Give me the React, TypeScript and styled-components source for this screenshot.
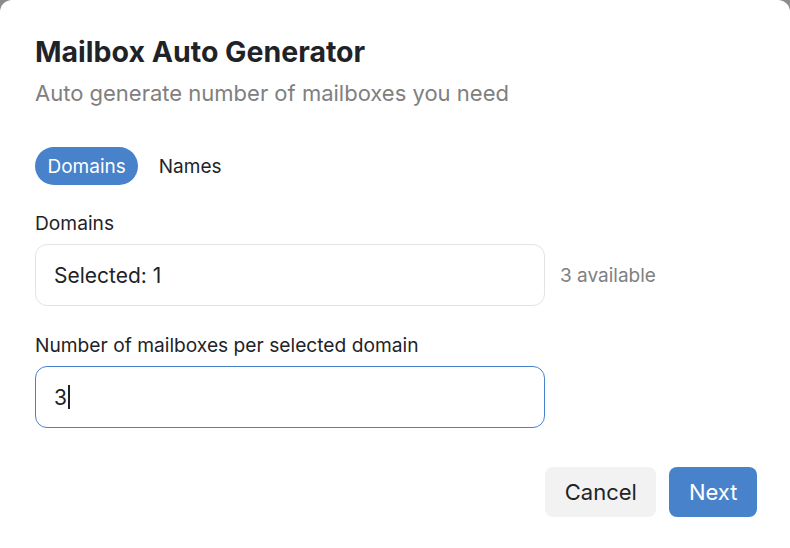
import React from "react";
import styled, { createGlobalStyle } from "styled-components";

const Global = createGlobalStyle`
  html, body { margin: 0; padding: 0; background: #8c8c8c; }
  body { font-family: Inter, "Noto Sans", sans-serif; color: #1f2328; }
  * { box-sizing: border-box; }
`;

const Modal = styled.div`
  width: 790px;
  height: 548px;
  background: #fff;
  border-radius: 12px 12px 0 0;
  padding: 35px 33px 0 35px;
  display: flex;
  flex-direction: column;
`;

const Title = styled.h1`
  margin: 0;
  font-size: 28.5px;
  font-weight: 700;
  line-height: 34px;
  color: #1f2328;
`;

const Subtitle = styled.p`
  margin: 9px 0 0;
  font-size: 22px;
  line-height: 30px;
  color: #808080;
`;

const Tabs = styled.div`
  display: flex;
  gap: 8px;
  margin-top: 39px;
`;

const Tab = styled.button<{ $active?: boolean }>`
  border: none;
  font-family: inherit;
  font-size: 19px;
  height: 38px;
  padding: 0 12.5px;
  border-radius: 19px;
  background: ${(p) => (p.$active ? "#4782cb" : "transparent")};
  color: ${(p) => (p.$active ? "#fff" : "#1f2328")};
  cursor: pointer;
`;

const Field = styled.div<{ $top: number }>`
  display: flex;
  flex-direction: column;
  gap: 8px;
  margin-top: ${(p) => p.$top}px;
`;

const Label = styled.label`
  font-size: 19.2px;
  line-height: 26px;
  color: #1f2328;
`;

const Row = styled.div`
  display: flex;
  align-items: center;
  gap: 15px;
`;

const Box = styled.div<{ $focused?: boolean }>`
  width: 510px;
  height: 62px;
  border-radius: 12px;
  border: 1px solid ${(p) => (p.$focused ? "#4782cb" : "#e3e3e3")};
  padding: 0 18px;
  display: flex;
  align-items: center;
  font-size: 21px;
  color: #1f2328;
`;

const Caret = styled.span`
  display: inline-block;
  width: 2px;
  height: 24px;
  background: #1f2328;
  margin-left: 1px;
`;

const Hint = styled.span`
  font-size: 19px;
  color: #808080;
`;

const Footer = styled.div`
  display: flex;
  justify-content: flex-end;
  gap: 13px;
  margin-top: 39px;
`;

const Button = styled.button<{ $primary?: boolean }>`
  height: 50px;
  border: none;
  border-radius: 8px;
  padding: 0 19.5px;
  font-family: inherit;
  font-size: 22px;
  background: ${(p) => (p.$primary ? "#4782cb" : "#f2f2f2")};
  color: ${(p) => (p.$primary ? "#fff" : "#1f2328")};
  cursor: pointer;
`;

export default function App() {
  return (
    <>
      <Global />
      <Modal>
        <Title>Mailbox Auto Generator</Title>
        <Subtitle>Auto generate number of mailboxes you need</Subtitle>
        <Tabs>
          <Tab $active>Domains</Tab>
          <Tab>Names</Tab>
        </Tabs>
        <Field $top={25}>
          <Label>Domains</Label>
          <Row>
            <Box>Selected: 1</Box>
            <Hint>3 available</Hint>
          </Row>
        </Field>
        <Field $top={26}>
          <Label>Number of mailboxes per selected domain</Label>
          <Row>
            <Box $focused>
              3<Caret />
            </Box>
          </Row>
        </Field>
        <Footer>
          <Button>Cancel</Button>
          <Button $primary>Next</Button>
        </Footer>
      </Modal>
    </>
  );
}
